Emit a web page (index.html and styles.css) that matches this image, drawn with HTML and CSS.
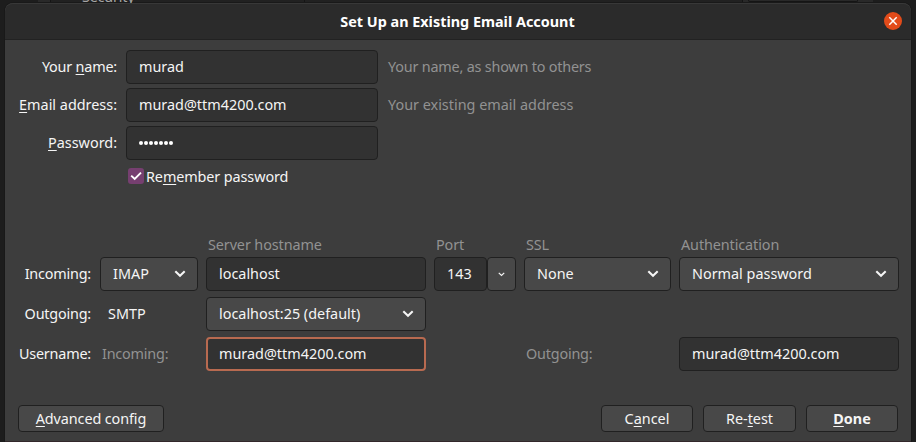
FILE: index.html
```html
<!DOCTYPE html>
<html lang="en">
<head>
<meta charset="utf-8">
<title>Set Up an Existing Email Account</title>
<link rel="stylesheet" href="styles.css">
</head>
<body>
<svg class="defs" width="0" height="0">
  <symbol id="chevron" viewBox="0 0 12 8"><path d="M1.3 1.3 6 5.7 10.7 1.3" fill="none" stroke="currentColor" stroke-width="2.1"/></symbol>
</svg>
<div class="backdrop"><div class="backdrop-panel"><span class="backdrop-text">Security</span><i class="backdrop-box"></i></div></div>
<main class="dialog">
  <header class="titlebar">
    <h1 class="title">Set Up an Existing Email Account</h1>
    <button class="close" aria-label="Close"><svg viewBox="0 0 18 18" width="18" height="18"><path d="M5.3 5.3 12.7 12.7M12.7 5.3 5.3 12.7" stroke="#fff" stroke-width="1.5"/></svg></button>
  </header>
  <section class="account">
    <label class="label tight">Your <u>n</u>ame:</label><div class="field">murad</div><span class="hint tight">Your name, as shown to others</span>
    <label class="label"><u>E</u>mail address:</label><div class="field">murad@ttm4200.com</div><span class="hint">Your existing email address</span>
    <label class="label"><u>P</u>assword:</label><div class="field"><span class="dots"><i></i><i></i><i></i><i></i><i></i><i></i><i></i></span></div>
  </section>
  <div class="remember">
    <span class="check"><svg viewBox="0 0 16 16" width="16" height="16"><path d="M3.2 7.6 6.7 11 13 4.7" fill="none" stroke="#fff" stroke-width="1.9"/></svg></span>
    <label class="remember-label">Re<u>m</u>ember password</label>
  </div>
  <section class="servers">
    <div class="row heads">
      <span></span><span></span><span>Server hostname</span><span>Port</span><span>SSL</span><span>Authentication</span>
    </div>
    <div class="row">
      <label class="label tight">Incoming:</label>
      <div class="field select">IMAP<svg class="chev"><use href="#chevron"/></svg></div>
      <div class="field">localhost</div>
      <div class="port"><div class="field number">143</div><div class="field drop"><svg class="chev small"><use href="#chevron"/></svg></div></div>
      <div class="field select">None<svg class="chev"><use href="#chevron"/></svg></div>
      <div class="field select">Normal password<svg class="chev"><use href="#chevron"/></svg></div>
    </div>
    <div class="row">
      <label class="label tight">Outgoing:</label><span class="protocol">SMTP</span>
      <div class="field select">localhost:25 (default)<svg class="chev"><use href="#chevron"/></svg></div>
    </div>
    <div class="row">
      <label class="label tight">Username:</label><span class="muted tight">Incoming:</span>
      <div class="field focused">murad@ttm4200.com</div><span></span>
      <span class="muted tight">Outgoing:</span><div class="field">murad@ttm4200.com</div>
    </div>
  </section>
  <footer class="actions">
    <button class="button advanced"><span><u>A</u>dvanced config</span></button>
    <button class="button"><span>C<u>a</u>ncel</span></button>
    <button class="button retest"><span>Re-<u>t</u>est</span></button>
    <button class="button primary"><span><u>D</u>one</span></button>
  </footer>
</main>
</body>
</html>
```
FILE: styles.css
```css
* { box-sizing: border-box; }
body {
  margin: 0;
  height: 442px;
  overflow: hidden;
  background: #1d1d1d;
  color: #f5f5f5;
  font: 14.4px/20px "Noto Sans", "Open Sans", sans-serif;
}
.defs { position: absolute; }
.backdrop { height: 3px; padding: 0 43px 0 38px; overflow: hidden; }
.backdrop-panel {
  display: flex;
  justify-content: space-between;
  height: 3px;
  padding: 0 15px 0 44px;
  background: linear-gradient(90deg, #292929 0 12px, #151515 12px 13px, #212121 13px 266px, #151515 266px 267px, #212121 267px 704px, #151515 704px 705px, #292929 705px);
}
.backdrop-text { height: 20px; margin-top: -13px; color: #a5a5a5; letter-spacing: -0.2px; }
.backdrop-box { width: 110px; height: 2px; border: solid #151515; border-width: 0 1px 1px; border-radius: 0 0 3px 3px; }
.dialog {
  width: 906px;
  height: 439px;
  margin-left: 5px;
  background: #3d3d3d;
  border-radius: 8px 8px 0 0;
  border-bottom: 1px solid #32282b;
  box-shadow: 0 0 0 1px #191919;
  overflow: hidden;
}
.titlebar {
  display: grid;
  grid-template-columns: 36px 1fr 36px;
  align-items: center;
  justify-items: center;
  height: 37px;
  background: #2b2b2b;
  border-top: 1px solid #383838;
  border-bottom: 1px solid #222;
  border-radius: 8px 8px 0 0;
}
.title { grid-column: 2; margin: 0 1px 0 0; font-size: 14.4px; line-height: 20px; font-weight: 700; color: #fff; white-space: nowrap; }
.close { display: grid; width: 18px; height: 18px; margin-bottom: 1px; padding: 0; border: 0; border-radius: 50%; background: #e24b1a; }
u { text-decoration: underline 1px; text-underline-offset: 2px; text-decoration-skip-ink: none; }
.account {
  display: grid;
  grid-template-columns: 112px 252px 1fr;
  column-gap: 9px;
  row-gap: 4px;
  align-items: center;
  padding-top: 10px;
}
.label { text-align: right; white-space: nowrap; }
.hint { padding-left: 1px; color: #929292; white-space: nowrap; }
.tight { letter-spacing: -0.2px; }
.field {
  display: flex;
  align-items: center;
  height: 34px;
  padding: 0 12px;
  border: 1px solid #202020;
  border-radius: 4px;
  background: #323232;
  white-space: nowrap;
}
.dots { display: flex; gap: 1px; }
.dots i { width: 4px; height: 4px; border-radius: 50%; background: #fff; }
.remember { display: flex; align-items: center; gap: 2px; height: 20px; margin: 6px 0 0 123px; letter-spacing: -0.1px; }
.remember-label { padding-top: 2px; }
.check { display: grid; width: 16px; height: 16px; border-radius: 3px; background: #763f70; }
.servers { margin-top: 48px; }
.row {
  display: grid;
  grid-template-columns: 87px 98px 220px 82px 147px 220px;
  column-gap: 8px;
  align-items: center;
  height: 34px;
  margin-bottom: 6px;
}
.row > .label { padding-right: 1px; }
.heads { height: 22px; margin-bottom: 1px; color: #929292; }
.heads span { padding-left: 2px; letter-spacing: -0.1px; }
.select, .drop, .button { background: #484848; }
.select { justify-content: space-between; }
.chev { width: 12px; height: 8px; }
.select .chev { margin-right: -1px; }
.chev.small { width: 7px; height: 5px; }
.port { display: flex; }
.number { width: 53px; }
.drop { width: 29px; padding: 0; justify-content: center; }
.protocol { padding-left: 8px; }
.muted { padding-left: 2px; color: #929292; }
.focused { border: 2px solid #b86a50; padding: 0 11px; }
.actions { display: flex; gap: 10px; margin: 34px 13px 0; }
.button {
  width: 92px;
  height: 27px;
  padding: 0;
  border: 1px solid #202020;
  border-radius: 4px;
  color: #f5f5f5;
  font: inherit;
  white-space: nowrap;
}
.advanced { width: 146px; margin-right: auto; letter-spacing: -0.1px; }
.retest { width: 93px; }
.primary { font-weight: 700; }
```
